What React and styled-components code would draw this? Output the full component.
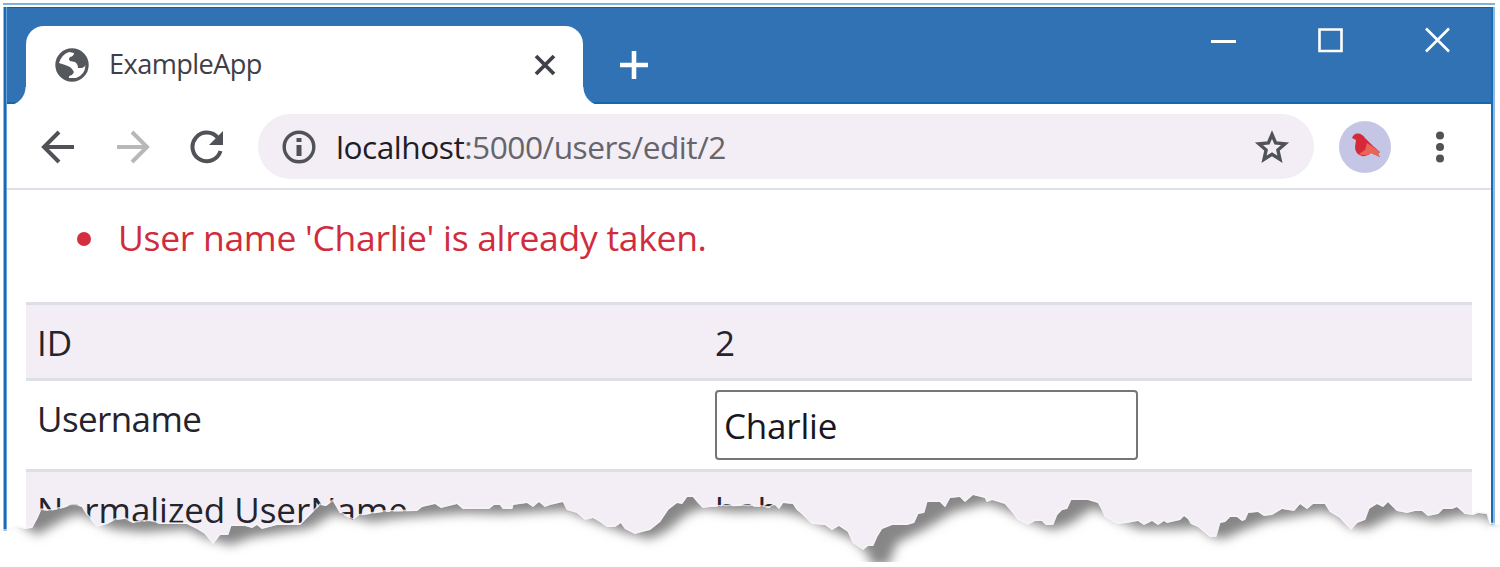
import React from "react";
import styled, { createGlobalStyle } from "styled-components";

const Global = createGlobalStyle`
  *, *::before, *::after { box-sizing: border-box; }
  html, body { margin: 0; background: #fff; overflow: hidden; }
  body { font-family: "Open Sans", "Noto Sans", sans-serif; color: #25232c; }
`;

const Page = styled.div`
  position: relative;
  width: 1500px;
  height: 567px;
  padding: 3px 5px 0 3px;
  overflow: hidden;
`;

const Window = styled.div`
  display: flex;
  flex-direction: column;
  height: 562px;
  border: solid #2c72b5;
  border-width: 0 4px;
  border-image: linear-gradient(90deg, #8fb9e0 0, #8fb9e0 1px, #1a6cb2 1px, #1a6cb2 3px, #6ba3d6 3px, #6ba3d6 calc(100% - 4px), #1a6cb2 calc(100% - 4px), #1a6cb2 calc(100% - 2px), #8fb9e0 calc(100% - 2px)) 0 4;
`;

const TopEdge = styled.div`
  height: 4px;
  flex: none;
  margin: 0 -4px;
  background: #fff;
  border-top: 2px solid #7fb3de;
`;

const TitleBar = styled.header`
  display: flex;
  flex: none;
  height: 97px;
  padding-top: 18px;
  background: #3072b4;
  border-top: 1px solid #0c62ab;
  border-bottom: 2px solid #1466ad;
`;

const Tab = styled.div`
  position: relative;
  display: flex;
  align-items: center;
  width: 557px;
  height: 80px;
  margin-left: 19px;
  margin-bottom: -2px;
  padding: 0 26px 2px 29px;
  background: #fff;
  border-radius: 18px 18px 0 0;
  &::before, &::after {
    content: "";
    position: absolute;
    bottom: 0;
    width: 19px;
    height: 19px;
  }
  &::before { left: -19px; background: radial-gradient(circle at 0 0, transparent 18px, #fff 19px); }
  &::after { right: -19px; background: radial-gradient(circle at 100% 0, transparent 18px, #fff 19px); }
`;

const Label = styled.span`
  font-size: ${(p) => p.$size}px;
  letter-spacing: ${(p) => p.$track || 0}px;
  line-height: 1;
  white-space: pre;
`;

const TabTitle = styled(Label)`
  flex: 1;
  margin-left: 20px;
  padding-bottom: 2px;
  color: #3f4047;
`;

const NewTab = styled.div`
  display: flex;
  align-items: center;
  height: 78px;
  margin-left: 37px;
`;

const WindowButtons = styled.div`
  display: flex;
  gap: 82px;
  align-items: flex-start;
  margin: 1px 41px 0 auto;
`;

const Toolbar = styled.div`
  display: flex;
  align-items: center;
  flex: none;
  height: 86px;
  padding: 1px 38px 0 31px;
  background: #fff;
  border-bottom: 2px solid #dfdfe8;
`;

const NavButtons = styled.div`
  display: flex;
  gap: 35px;
`;

const AddressBar = styled.div`
  display: flex;
  align-items: center;
  width: 1056px;
  height: 65px;
  margin-left: 30px;
  padding: 0 24px 0 24px;
  border-radius: 33px;
  background: #f3eef5;
`;

const Url = styled(Label)`
  flex: 1;
  margin-left: 20px;
  color: #66656c;
  b { font-weight: 400; color: #1f1e27; }
`;

const Avatar = styled.div`
  width: 52px;
  height: 52px;
  margin: 0 45px 0 25px;
  border-radius: 50%;
  background: #c5c6e5;
`;

const Content = styled.main`
  flex: 1;
  min-height: 0;
  overflow: hidden;
  background: #fff;
  padding: 0 19px;
`;

const Errors = styled.ul`
  display: flex;
  align-items: center;
  height: 99px;
  margin: 0;
  padding: 0 0 3px 51px;
  list-style: none;
  color: #d02c3d;
`;

const ErrorItem = styled.li`
  display: flex;
  align-items: center;
  gap: 27px;
  &::before {
    content: "";
    width: 14px;
    height: 14px;
    margin-top: 2px;
    border-radius: 50%;
    background: #d42f40;
  }
`;

const Table = styled.div`
  margin-top: 13px;
  width: 1446px;
`;

const Row = styled.div`
  display: grid;
  grid-template-columns: 677px 1fr;
  height: ${(p) => p.$height}px;
  border-top: 3px solid #dddfe6;
  background: ${(p) => (p.$striped ? "#f3eef5" : "#fff")};
`;

const Cell = styled.div`
  padding: ${(p) => (p.$field ? "9px 12px 0" : "20px 12px 0 11px")};
`;

const ValueCell = styled(Cell)`
  padding-left: 12px;
`;

const Field = styled.div`
  display: flex;
  align-items: center;
  width: 423px;
  height: 70px;
  padding: 1px 0 0 7px;
  border: 2px solid #767676;
  border-radius: 4px;
  background: #fff;
  color: #18161f;
`;

const Tear = styled.svg`
  position: absolute;
  left: 0;
  top: 480px;
`;

const edge = "0,531 9,531 17,527 25,529 32,528 37,519 41,510 50,511 63,508 72,505 82,507 87,515 97,527 107,524 115,520 125,519 133,523 150,521 160,524 187,524 197,529 205,534 213,544 220,535 228,535 231,526 245,526 252,528 257,525 262,529 277,525 300,525 310,515 320,505 326,506 333,501 340,513 353,520 358,516 370,514 383,512 417,511 422,507 435,504 441,508 457,504 463,509 489,509 494,505 500,505 503,509 512,509 513,505 527,503 533,507 539,502 545,507 550,505 563,502 567,510 577,513 585,520 593,518 600,522 607,527 615,527 621,523 625,529 635,534 642,532 650,530 660,522 668,510 677,503 682,504 687,497 693,497 698,503 703,508 710,507 740,506 762,507 769,508 775,505 779,509 783,503 793,504 797,510 803,515 812,524 825,525 832,530 839,526 848,532 853,543 863,550 868,546 873,546 877,537 882,529 892,525 907,525 914,523 918,514 924,513 927,502 940,502 945,507 950,498 960,497 965,502 973,495 985,498 987,502 992,500 1005,504 1012,512 1018,520 1028,525 1035,521 1042,521 1046,525 1053,525 1057,515 1062,510 1067,509 1071,500 1088,500 1098,503 1102,510 1105,517 1117,524 1127,523 1138,521 1144,525 1152,521 1158,525 1164,521 1167,523 1180,520 1184,516 1188,519 1191,524 1198,527 1210,537 1216,537 1220,523 1225,522 1230,517 1237,517 1242,521 1245,520 1248,513 1258,512 1264,516 1272,515 1282,509 1294,511 1300,504 1307,509 1313,504 1325,504 1330,512 1340,518 1351,530 1357,523 1365,520 1369,509 1377,504 1383,507 1388,502 1393,507 1397,511 1407,513 1415,511 1422,511 1428,516 1438,514 1443,509 1452,509 1457,507 1465,514 1473,515 1478,513 1487,514 1490,524 1500,526";

const shade = "19,520 37,533 68,515 80,512 93,518 113,527 143,530 187,527 207,536 230,543 253,535 310,526 333,512 353,515 372,520 397,516 463,511 503,512 550,509 567,508 583,515 623,530 650,537 667,529 687,512 703,506 733,510 780,509 800,513 833,529 853,537 868,552 872,564 888,564 897,541 927,526 953,510 987,501 1007,508 1027,519 1053,528 1070,522 1093,506 1107,512 1117,518 1140,527 1177,527 1200,525 1210,534 1223,537 1243,528 1267,519 1323,509 1337,514 1350,525 1367,527 1397,512 1437,519 1460,514 1483,514 1496,524";

function TornEdge() {
  return (
    <Tear width="1500" height="87" viewBox="0 480 1500 87">
      <defs>
        <clipPath id="paper"><path d={`M${edge} V562 H7 Z`} /></clipPath>
        <filter id="soft" x="-5%" y="-50%" width="110%" height="200%">
          <feGaussianBlur stdDeviation="5.5" />
        </filter>
      </defs>
      <path d={`M${edge} V567 H0 Z`} fill="#fff" />
      <g clipPath="url(#paper)">
        <path d={`M${shade} V460 H19 Z`} transform="translate(0 2)" fill="#868686" filter="url(#soft)" />
      </g>
      <polyline points={edge} transform="translate(0 -1)" fill="none" stroke="#f7f5f8" strokeWidth="1.4" strokeOpacity="0.8" />
      <path d="M1500 527V567H1480L1488 527Z" fill="#fff" fillOpacity="0.5" />
    </Tear>
  );
}

const ink = { fill: "none", stroke: "#515258", strokeWidth: 4 };

export default function App() {
  return (
    <Page>
      <Global />
      <Window>
        <TopEdge />
        <TitleBar>
          <Tab>
            <svg width="34" height="34" viewBox="0 0 34 34">
              <circle cx="17" cy="17" r="16.7" fill="#54585d" />
              <path d="M4 15Q6 7 14 4L19 5Q19 8 15 9Q13 11 15 13L20 14Q23 16 23 20L27 20Q30 19 30.5 17Q30 27 21 30L14 30Q13 28 17 27L19 24L17 21L15 19Q11 17 4 15Z" fill="#fff" />
            </svg>
            <TabTitle $size={27.2} $track={-0.6}>ExampleApp</TabTitle>
            <svg width="24" height="24" viewBox="0 0 24 24"><path d="M3 3L21 21M21 3L3 21" {...ink} stroke="#3e4147" strokeWidth="3.8" /></svg>
          </Tab>
          <NewTab>
            <svg width="28" height="28" viewBox="0 0 28 28"><path d="M0 14H28M14 0V28" stroke="#fff" strokeWidth="4.6" /></svg>
          </NewTab>
          <WindowButtons>
            <svg width="25" height="26" viewBox="0 0 25 26"><path d="M0 14.5H25" stroke="#fff" strokeWidth="3" /></svg>
            <svg width="25" height="26" viewBox="0 0 25 26"><path d="M1.5 2.5H23.5V24H1.5Z" fill="none" stroke="#fff" strokeWidth="2.6" /></svg>
            <svg width="25" height="26" viewBox="0 0 25 26"><path d="M1 1.5L24 24.5M24 1.5L1 24.5" fill="none" stroke="#fff" strokeWidth="2.6" /></svg>
          </WindowButtons>
        </TitleBar>
        <Toolbar>
          <NavButtons>
            <svg width="40" height="34" viewBox="0 0 40 34"><path d="M36 17H6M21 2L6 17L21 32" {...ink} /></svg>
            <svg width="40" height="34" viewBox="0 0 40 34"><path d="M4 17H34M19 2L34 17L19 32" {...ink} stroke="#b8b8b9" /></svg>
            <svg width="40" height="34" viewBox="0 0 40 34">
              <path d="M32.5 21A14.3 14.3 0 1 1 30 8" {...ink} />
              <path d="M35 1V15H21Z" fill="#515258" />
            </svg>
          </NavButtons>
          <AddressBar>
            <svg width="34" height="34" viewBox="0 0 34 34">
              <circle cx="17" cy="17" r="14.8" {...ink} strokeWidth="3.4" />
              <path d="M17 8V12M17 15V26" {...ink} strokeWidth="5" />
            </svg>
            <Url $size={31.7} $track={-0.5}><b>localhost</b>:5000/users/edit/2</Url>
            <svg width="36" height="34" viewBox="0 0 36 34">
              <path d="M18 4.5L21.6 13L31 13.8L23.9 20L26 29.3L18 24.3L10 29.3L12.1 20L5 13.8L14.4 13Z" {...ink} strokeWidth="3.4" />
            </svg>
          </AddressBar>
          <Avatar>
            <svg width="52" height="52" viewBox="0 0 52 52">
              <path d="M13 17Q15 12 19 12.5Q23 12.5 26 17L34 25L41 31L39 33L41 36L32 32Q28 36 23 35Q16 33 16 26L17 19Z" fill="#d5293a" />
              <path d="M28 22L34 26L41 31L39 33L41 36L32 32Q27 36 20 33L26 29Z" fill="#ea6558" />
            </svg>
          </Avatar>
          <svg width="8" height="34" viewBox="0 0 8 34" fill="#515156">
            <circle cx="4" cy="5.5" r="4" /><circle cx="4" cy="17" r="4" /><circle cx="4" cy="28.5" r="4" />
          </svg>
        </Toolbar>
        <Content>
          <Errors>
            <ErrorItem><Label $size={35.5} $track={-0.3}>User name 'Charlie' is already taken.</Label></ErrorItem>
          </Errors>
          <Table>
            <Row $height={76} $striped>
              <Cell><Label $size={35} $track={-0.1}>ID</Label></Cell>
              <ValueCell><Label $size={35}>2</Label></ValueCell>
            </Row>
            <Row $height={91}>
              <Cell><Label $size={35} $track={-0.6}>Username</Label></Cell>
              <Cell $field><Field><Label $size={35} $track={-0.2}>Charlie</Label></Field></Cell>
            </Row>
            <Row $height={96} $striped>
              <Cell><Label $size={35} $track={-0.05}>Normalized UserName</Label></Cell>
              <ValueCell><Label $size={35} $track={0}>bob</Label></ValueCell>
            </Row>
          </Table>
        </Content>
      </Window>
      <TornEdge />
    </Page>
  );
}
